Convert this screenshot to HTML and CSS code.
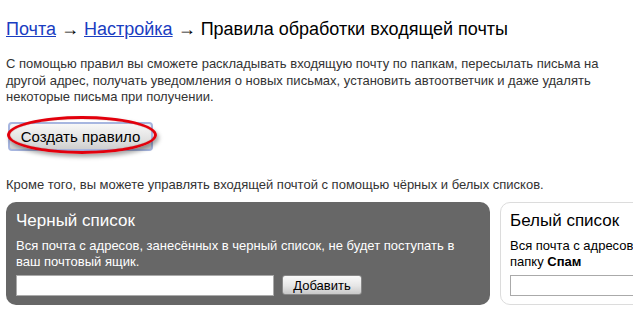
FILE: index.html
```html
<!DOCTYPE html>
<html lang="ru">
<head>
<meta charset="utf-8">
<link rel="stylesheet" href="styles.css">
</head>
<body>
<div class="page">
  <h1 class="crumbs"><a href="#">Почта</a> → <a href="#">Настройка</a> → Правила обработки входящей почты</h1>
  <p class="intro">С помощью правил вы сможете раскладывать входящую почту по папкам, пересылать письма на другой адрес, получать уведомления о новых письмах, установить автоответчик и даже удалять некоторые письма при получении.</p>
  <div class="create-wrap">
    <button class="create">Создать правило</button>
  </div>
  <p class="also">Кроме того, вы можете управлять входящей почтой с помощью чёрных и белых списков.</p>
  <div class="lists">
    <div class="list black">
      <h2 class="list-title">Черный список</h2>
      <p class="list-desc">Вся почта с адресов, занесённых в черный список, не будет поступать в ваш почтовый ящик.</p>
      <div class="list-form">
        <input class="list-input" type="text">
        <button class="add">Добавить</button>
      </div>
    </div>
    <div class="list white">
      <h2 class="list-title">Белый список</h2>
      <p class="list-desc">Вся почта с адресов, занесённых в белый список, никогда не попадёт в папку <b>Спам</b></p>
      <div class="list-form">
        <input class="list-input" type="text">
        <button class="add">Добавить</button>
      </div>
    </div>
  </div>
</div>
</body>
</html>
```

FILE: styles.css
```css
html, body {
  margin: 0;
  padding: 0;
  background: #fff;
  overflow: hidden;
}
body {
  font-family: "Liberation Sans", Arial, sans-serif;
  color: #000;
}
.page {
  padding: 0 6px;
  width: 621px;
  overflow: hidden;
}
.crumbs {
  margin: 0;
  padding-top: 18px;
  font-size: 18px;
  font-weight: normal;
  line-height: 22px;
  color: #000;
}
.crumbs a {
  color: #1a3dc1;
  text-decoration: underline;
}
.intro {
  width: 610px;
  margin: 16px 0 0;
  font-size: 13px;
  line-height: 16.5px;
  color: #333;
}
.create-wrap {
  position: relative;
  display: inline-block;
  margin-top: 16px;
  margin-left: 2px;
}
.create {
  display: block;
  height: 29px;
  width: 145px;
  padding: 0;
  font-family: "Liberation Sans", Arial, sans-serif;
  font-size: 15px;
  color: #000;
  border: 2px solid #a7b6e0;
  border-radius: 4px;
  background: linear-gradient(#f7f7f7, #e2e2e2 60%, #cfcfcf);
}
.create-wrap::after {
  content: "";
  position: absolute;
  left: -1px;
  right: -4px;
  top: -6px;
  bottom: -3px;
  border: 3px solid #e2000c;
  border-radius: 50%;
  box-shadow: 2px 3px 4px rgba(0,0,0,0.35), inset 0 0 1px rgba(120,0,0,0.6);
  pointer-events: none;
}
.also {
  margin: 26px 0 0;
  font-size: 13px;
  line-height: 16px;
  color: #333;
}
.lists {
  display: flex;
  gap: 10px;
  margin-top: 9px;
}
.list {
  flex: none;
  width: 484px;
  height: 103px;
  box-sizing: border-box;
  border-radius: 10px;
  padding: 9px 10px 0;
}
.black {
  background: #676767;
  color: #fff;
}
.white {
  background: #fff;
  border: 1px solid #dcdcdc;
  padding: 8px 9px 0;
  color: #000;
}
.list-title {
  margin: 0;
  font-size: 17px;
  font-weight: normal;
  line-height: 20px;
}
.list-desc {
  margin: 7px 0 0;
  font-size: 13px;
  line-height: 16px;
}
.list-form {
  display: flex;
  align-items: center;
  gap: 8px;
  margin-top: 5px;
}
.list-input {
  width: 258px;
  height: 21px;
  box-sizing: border-box;
  margin: 0;
  border: 1px solid #aaa;
  background: #fff;
}
.white .list-input {
  width: 300px;
}
.add {
  width: 80px;
  height: 20px;
  padding: 0;
  font-family: "Liberation Sans", Arial, sans-serif;
  font-size: 13px;
  color: #000;
  border: 1px solid #888;
  border-radius: 3px;
  background: linear-gradient(#fafafa, #e6e6e6 55%, #c8c8c8);
}
```
